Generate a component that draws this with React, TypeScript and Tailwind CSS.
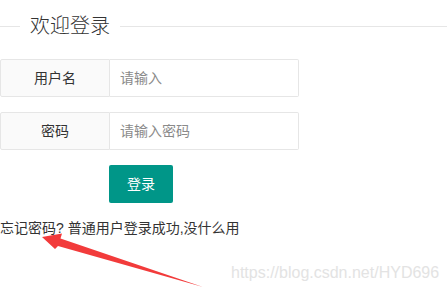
import React from 'react'

const font = "font-['Liberation_Sans','Noto_Sans_CJK_SC',sans-serif]"

function Field({ label, placeholder, type = 'text' }: { label: string; placeholder: string; type?: string }) {
  return (
    <div className="flex h-[38px] w-[299px]">
      <label className="flex w-[110px] items-center justify-center rounded-l-[2px] border border-[#e6e6e6] bg-[#fafafa] text-[14px] text-[#333]">
        {label}
      </label>
      <input
        type={type}
        placeholder={placeholder}
        className="min-w-0 flex-1 rounded-r-[2px] border border-l-0 border-[#e6e6e6] bg-white pl-[10px] text-[14px] text-[#333] outline-none placeholder:text-[#8a8a8a]"
      />
    </div>
  )
}

export default function App() {
  return (
    <div className={`relative h-[293px] w-[447px] overflow-hidden bg-white ${font}`}>
      <div className="mt-[14px] flex h-[24px] items-center">
        <div className="h-px w-5 bg-[#e6e6e6]" />
        <span className="px-2.5 text-[20px] font-light leading-[24px] text-[#333]">欢迎登录</span>
        <div className="h-px flex-1 bg-[#e6e6e6]" />
      </div>

      <form className="mt-[21px]" onSubmit={(e) => e.preventDefault()}>
        <Field label="用户名" placeholder="请输入" />
        <div className="mt-[15px]">
          <Field label="密码" placeholder="请输入密码" type="password" />
        </div>
        <button
          type="submit"
          className="ml-[109px] mt-[15px] h-[38px] w-[64px] rounded-[2px] bg-[#009688] text-[14px] text-white"
        >
          登录
        </button>
      </form>

      <p className="mt-[15px] text-[14px] leading-[20px] text-[#333]">
        忘记密码? 普通用户登录成功,没什么用
      </p>

      <svg className="pointer-events-none absolute left-0 top-0" width="447" height="293" viewBox="0 0 447 293">
        <polygon points="42,237 62,233.5 60.5,238.5 203,287 58,246 55,249" fill="#f23b3b" />
      </svg>

      <span className="absolute left-[231px] top-[263px] text-[16px] leading-[20px] text-[#e3e3e3]">
        https://blog.csdn.net/HYD696
      </span>
    </div>
  )
}
